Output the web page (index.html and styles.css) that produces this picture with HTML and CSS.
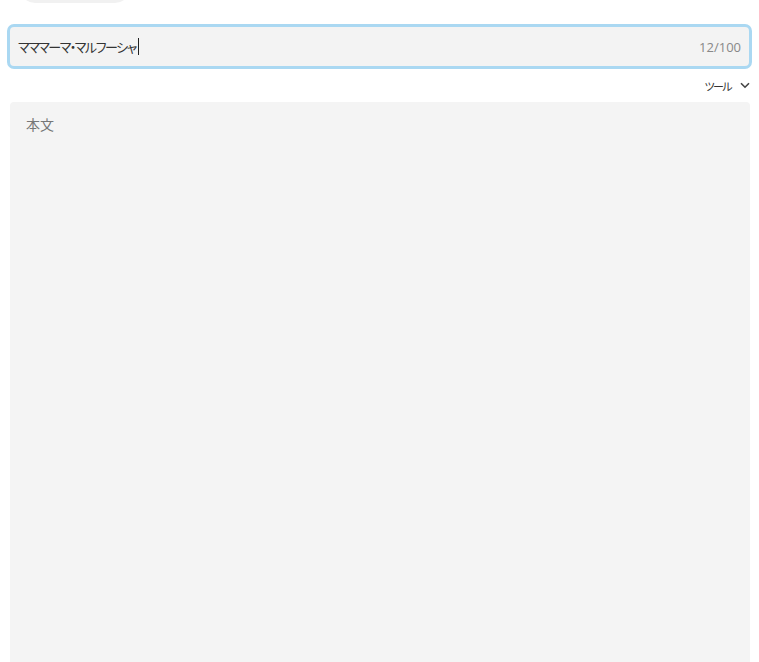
FILE: index.html
```html
<!DOCTYPE html>
<html lang="ja">
<head>
<meta charset="utf-8">
<link rel="stylesheet" href="styles.css">
</head>
<body>
<div class="page">
  <div class="top-pill"></div>
  <div class="title-field">
    <span class="title-text">マママーマ・マルフーシャ</span><span class="caret"></span>
    <span class="counter">12/100</span>
  </div>
  <div class="tools-row">
    <span class="tools">ツール</span>
    <svg class="chev" width="10" height="7" viewBox="0 0 10 7"><path d="M1 1.2 L5 5.2 L9 1.2" fill="none" stroke="#444" stroke-width="1.6"/></svg>
  </div>
  <div class="body-field">
    <span class="placeholder">本文</span>
  </div>
</div>
</body>
</html>
```
FILE: styles.css
```css
html, body {
  margin: 0;
  padding: 0;
  background: #fff;
  overflow: hidden;
}
body {
  font-family: "Noto Sans CJK JP", "Noto Sans", sans-serif;
  color: #333;
}
.page {
  width: 759px;
  height: 662px;
  display: flex;
  flex-direction: column;
}
.top-pill {
  margin: -27px 0 0 20px;
  width: 110px;
  height: 30px;
  border-radius: 15px;
  background: #f1f1f1;
}
.title-field {
  margin: 21px 7px 0 7px;
  height: 45px;
  box-sizing: border-box;
  border: 3px solid #aad8f2;
  border-radius: 7px;
  background: #f3f3f3;
  display: flex;
  align-items: center;
  padding: 0 8px 0 8px;
}
.title-text {
  font-size: 13px;
  color: #333;
  font-feature-settings: "palt" 1;
  letter-spacing: -1.5px;
}
.caret {
  width: 1px;
  height: 17px;
  background: #222;
  margin-left: 2px;
}
.counter {
  margin-left: auto;
  font-family: "Open Sans", "Noto Sans", sans-serif;
  font-size: 13px;
  color: #888;
}
.tools-row {
  display: flex;
  justify-content: flex-end;
  align-items: center;
  height: 33px;
  padding-right: 9px;
  gap: 9px;
}
.tools {
  font-size: 11px;
  color: #333;
  font-feature-settings: "palt" 1;
  letter-spacing: -1.6px;
}
.chev {
  display: block;
}
.body-field {
  margin: 0 9px 0 10px;
  flex: 1;
  background: #f4f4f4;
  border-radius: 4px 4px 0 0;
  padding: 9px 16px;
}
.placeholder {
  font-size: 14px;
  color: #777;
}
```
